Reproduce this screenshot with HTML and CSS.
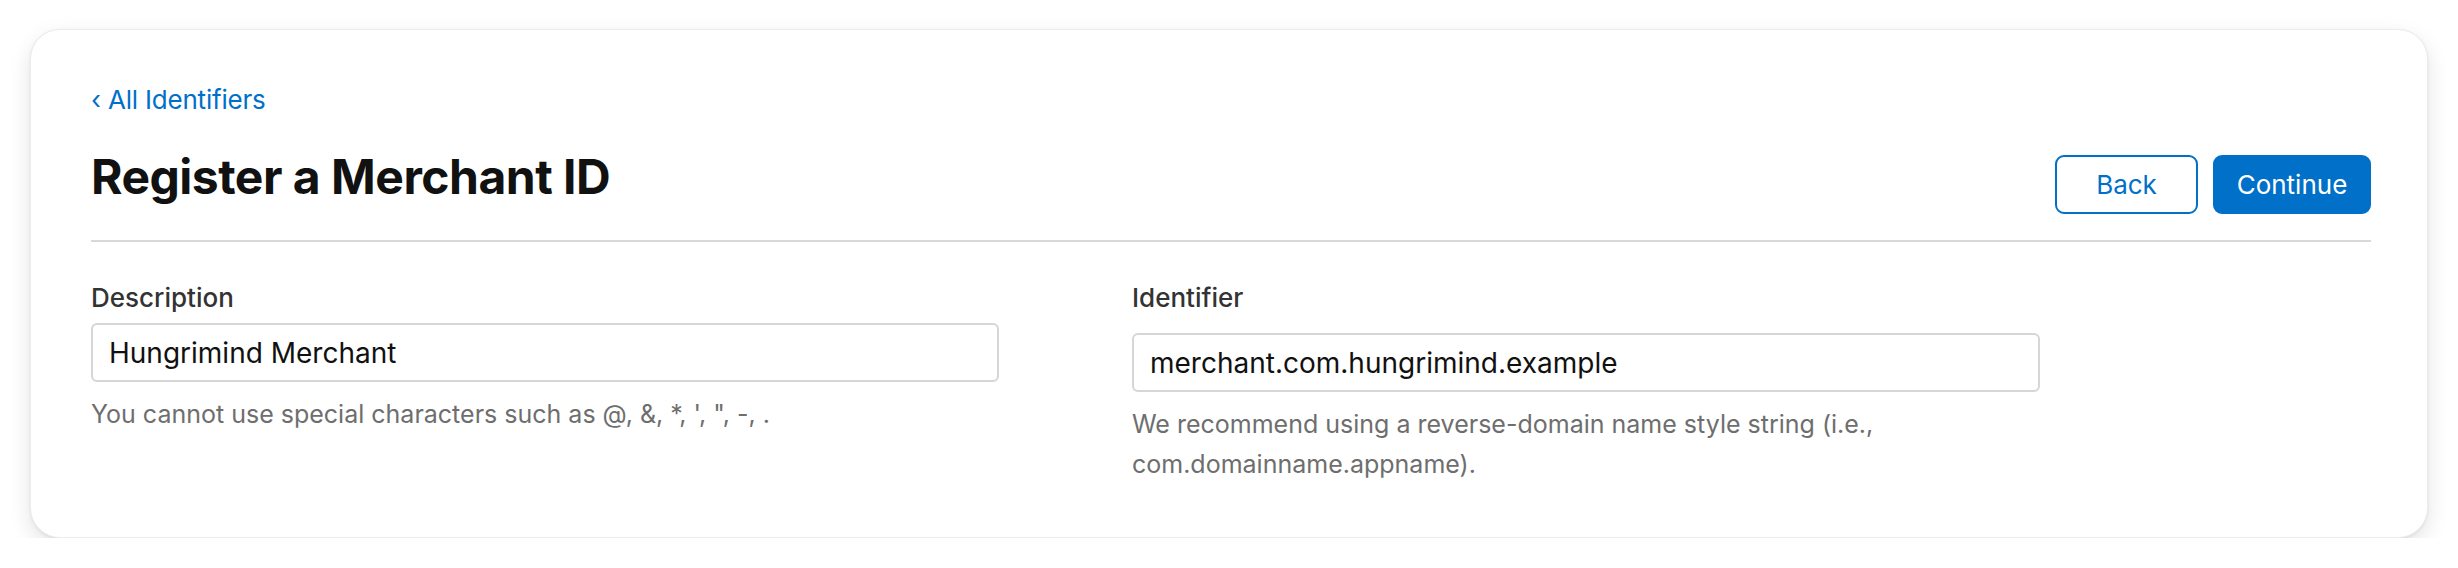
FILE: index.html
```html
<!DOCTYPE html>
<html lang="en">
<head>
<meta charset="utf-8">
<title>Register a Merchant ID</title>
<link rel="stylesheet" href="styles.css">
</head>
<body>
<main class="card">
  <a class="back-link" href="#"><span class="chev">‹</span> All Identifiers</a>
  <div class="header">
    <h1 class="title">Register a Merchant ID</h1>
    <div class="actions">
      <button class="btn btn-secondary" type="button">Back</button>
      <button class="btn btn-primary" type="button">Continue</button>
    </div>
  </div>
  <hr class="divider">
  <div class="fields">
    <div class="field">
      <label class="label" for="desc">Description</label>
      <input class="input input-desc" id="desc" type="text" value="Hungrimind Merchant">
      <p class="help">You cannot use special characters such as @, &amp;, *, ', ", -, .</p>
    </div>
    <div class="field">
      <label class="label" for="ident">Identifier</label>
      <input class="input input-ident" id="ident" type="text" value="merchant.com.hungrimind.example">
      <p class="help">We recommend using a reverse-domain name style string (i.e., com.domainname.appname).</p>
    </div>
  </div>
</main>
</body>
</html>
```
FILE: styles.css
```css
* { box-sizing: border-box; }
html, body { margin: 0; padding: 0; background: #ffffff; }
body {
  font-family: Inter, "Noto Sans", "Liberation Sans", sans-serif;
  color: #1d1d1f;
  padding: 29px 30px 0 30px;
}
.card {
  display: flex;
  flex-direction: column;
  height: 509px;
  background: #fff;
  border: 1px solid #ececec;
  border-radius: 30px;
  box-shadow: 0 8px 22px rgba(0,0,0,0.11), 0 1px 3px rgba(0,0,0,0.07);
  padding: 51px 56px 0 60px;
}
.back-link {
  align-self: flex-start;
  font-size: 26px;
  line-height: 38px;
  color: #0070c9;
  text-decoration: none;
  letter-spacing: -0.2px;
}
.chev { font-size: 26px; }
.header {
  display: flex;
  justify-content: space-between;
  align-items: flex-start;
  margin-top: 29px;
}
.title {
  margin: 0;
  font-size: 48px;
  line-height: 58px;
  font-weight: 700;
  color: #111;
  letter-spacing: -0.5px;
}
.actions {
  display: flex;
  gap: 15px;
  margin-top: 7px;
}
.btn {
  height: 59px;
  border-radius: 9px;
  font-family: inherit;
  font-size: 26px;
  padding: 0 20px;
  border: 2px solid #0070c9;
  cursor: pointer;
}
.btn-secondary { background: #fff; color: #0070c9; min-width: 143px; }
.btn-primary { background: #0070c9; color: #fff; min-width: 158px; }
.divider {
  margin: 26px 0 0 0;
  border: 0;
  height: 2px;
  background: #d8d8d8;
}
.fields {
  display: grid;
  grid-template-columns: 908px 908px;
  column-gap: 133px;
  margin-top: 37px;
}
.field { display: flex; flex-direction: column; align-items: flex-start; }
.label {
  font-size: 26px;
  line-height: 38px;
  font-weight: 500;
  color: #333;
}
.input {
  width: 908px;
  height: 59px;
  border: 2px solid #d6d6d6;
  border-radius: 6px;
  padding: 0 16px;
  font-family: inherit;
  font-size: 28px;
  color: #111;
  background: #fff;
}
.input-desc { margin-top: 6px; }
.input-ident { margin-top: 16px; }
.help {
  margin: 12px 0 0 0;
  font-size: 25px;
  line-height: 40px;
  color: #6e6e6e;
}
```
